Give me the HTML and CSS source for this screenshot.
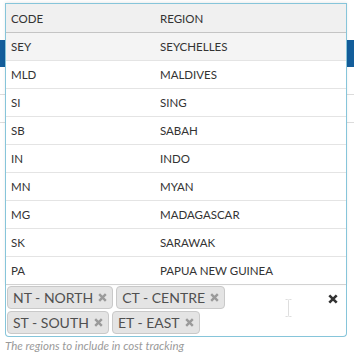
FILE: index.html
```html
<!DOCTYPE html>
<html lang="en">
<head>
    <meta charset="UTF-8">
    <meta name="viewport" content="width=device-width, initial-scale=1.0">
    <title>Regions</title>
    <link rel="stylesheet" href="styles.css">
</head>
<body>
    <div class="page">
        <div class="grid">
            <div class="grid-head"></div>
            <div class="grid-row"></div>
            <div class="grid-row"></div>
        </div>

        <div class="field">
            <div class="select">
                <div class="dropdown">
                    <table class="options">
                        <colgroup><col class="code"><col></colgroup>
                        <thead>
                            <tr><th>Code</th><th>Region</th></tr>
                        </thead>
                        <tbody>
                            <tr class="hover"><td>SEY</td><td>Seychelles</td></tr>
                            <tr><td>MLD</td><td>Maldives</td></tr>
                            <tr><td>SI</td><td>Sing</td></tr>
                            <tr><td>SB</td><td>Sabah</td></tr>
                            <tr><td>IN</td><td>Indo</td></tr>
                            <tr><td>MN</td><td>Myan</td></tr>
                            <tr><td>MG</td><td>Madagascar</td></tr>
                            <tr><td>SK</td><td>Sarawak</td></tr>
                            <tr><td>PA</td><td>Papua New Guinea</td></tr>
                        </tbody>
                    </table>
                </div>

                <ul class="tags">
                    <li class="tag">NT - NORTH<span class="tag-x"><svg width="9" height="9" viewBox="0 0 9 9"><path d="M1.2 1.2 L7.8 7.8 M7.8 1.2 L1.2 7.8" /></svg></span></li>
                    <li class="tag">CT - CENTRE<span class="tag-x"><svg width="9" height="9" viewBox="0 0 9 9"><path d="M1.2 1.2 L7.8 7.8 M7.8 1.2 L1.2 7.8" /></svg></span></li>
                    <li class="tag">ST - SOUTH<span class="tag-x"><svg width="9" height="9" viewBox="0 0 9 9"><path d="M1.2 1.2 L7.8 7.8 M7.8 1.2 L1.2 7.8" /></svg></span></li>
                    <li class="tag">ET - EAST<span class="tag-x"><svg width="9" height="9" viewBox="0 0 9 9"><path d="M1.2 1.2 L7.8 7.8 M7.8 1.2 L1.2 7.8" /></svg></span></li>
                </ul>

                <span class="clear-all"><svg width="10" height="10" viewBox="0 0 10 10"><path d="M1.3 1.3 L8.7 8.7 M8.7 1.3 L1.3 8.7" /></svg></span>
                <span class="ibeam"><svg width="7" height="18" viewBox="0 0 7 18"><path d="M0.5 0.5 H2.5 Q3.5 0.5 3.5 1.5 V16.5 Q3.5 17.5 2.5 17.5 H0.5 M6.5 0.5 H4.5 Q3.5 0.5 3.5 1.5 M3.5 16.5 Q3.5 17.5 4.5 17.5 H6.5" /></svg></span>
            </div>
            <p class="help">The regions to include in cost tracking</p>
        </div>
    </div>
</body>
</html>
```

FILE: styles.css
```css
body {
    margin: 0;
    font-family: Lato, 'Open Sans', sans-serif;
    background: #fff;
    color: #333;
    overflow: hidden;
}
.page {
    display: grid;
    width: 354px;
    height: 360px;
}
.grid, .field {
    grid-area: 1 / 1;
}
.grid {
    padding-top: 40px;
}
.grid-head {
    height: 27px;
    background-color: #135e9b;
}
.grid-row {
    height: 27px;
    border-bottom: 1px solid #dcdcdc;
}
.field {
    padding: 285px 0 0 5px;
}
.select {
    position: relative;
    width: 340px;
    border: 1px solid #86c5da;
    border-top: none;
    border-radius: 0 0 4px 4px;
    background: #fff;
}
.dropdown {
    position: absolute;
    left: -1px;
    bottom: 100%;
    width: 340px;
    border: 1px solid #86c5da;
    border-bottom: none;
    background: #fff;
    box-shadow: 0 -1px 3px rgba(0, 0, 0, 0.08);
}
.options {
    width: 100%;
    table-layout: fixed;
    border-collapse: collapse;
    font-size: 11.5px;
    text-transform: uppercase;
    text-align: left;
}
.options col.code {
    width: 149px;
}
.options th, .options td {
    height: 27px;
    padding: 0 0 0 5px;
    font-weight: normal;
    border-bottom: 1px solid #e4e4e4;
    color: #333;
    white-space: nowrap;
}
.options th {
    height: 28px;
    background-color: #f0f0f0;
    border-bottom-color: #c4c4c4;
}
.options tr.hover td {
    background-color: #f4f4f4;
}
.options tbody tr:last-child td {
    border-bottom-color: #d2d2d2;
}
.tags {
    list-style: none;
    margin: 0;
    padding: 1px 30px 2px 1px;
    display: flex;
    flex-wrap: wrap;
    gap: 2px 3px;
}
.tag {
    display: flex;
    align-items: center;
    height: 21px;
    padding: 0 5px 0 5px;
    border: 1px solid #c9c9c9;
    border-radius: 4px;
    background-color: #e4e4e4;
    color: #505050;
    font-size: 14px;
    white-space: nowrap;
}
.tag-x {
    display: flex;
    margin-left: 5px;
}
.tag-x path {
    stroke: #9a9a9a;
    stroke-width: 2.4;
    fill: none;
}
.clear-all {
    position: absolute;
    right: 8px;
    top: 9px;
    display: flex;
}
.clear-all path {
    stroke: #333;
    stroke-width: 2.6;
    fill: none;
}
.ibeam {
    position: absolute;
    left: 279px;
    top: 14px;
    display: flex;
}
.ibeam path {
    stroke: #dedede;
    stroke-width: 1;
    fill: none;
}
.help {
    margin: 2px 0 0;
    font-size: 11.5px;
    font-style: italic;
    color: #9a9a9a;
}
```
